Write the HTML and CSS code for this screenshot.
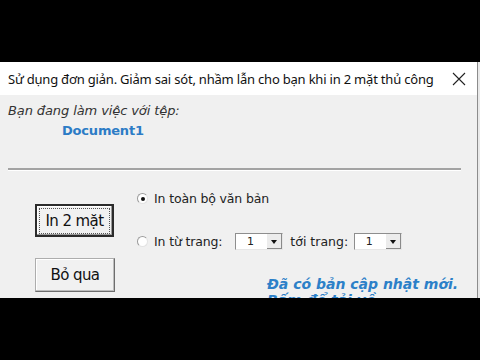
FILE: index.html
```html
<!DOCTYPE html>
<html lang="vi">

<head>
  <meta charset="UTF-8">
  <title>In 2 mặt</title>
  <link rel="stylesheet" href="styles.css">
</head>

<body>
  <div class="letterbox"></div>

  <div class="middle">
    <div class="window">
      <div class="titlebar">
        <span class="title">Sử dụng đơn giản. Giảm sai sót, nhầm lẫn cho bạn khi in 2 mặt thủ công</span>
        <svg class="close" width="14" height="14" viewBox="0 0 14 14">
          <path d="M1 1 L13 13 M13 1 L1 13" stroke="#222" stroke-width="1.1" fill="none" />
        </svg>
      </div>

      <div class="content">
        <p class="file-label">Bạn đang làm việc với tệp:</p>
        <p class="file-name">Document1</p>
        <div class="separator"></div>

        <div class="main">
          <div class="buttons">
            <button class="btn btn-default"><span class="focus">In 2 mặt</span></button>
            <button class="btn">Bỏ qua</button>
          </div>

          <div class="options">
            <label class="option">
              <span class="radio checked"></span>
              <span>In toàn bộ văn bản</span>
            </label>
            <label class="option option-range">
              <span class="radio"></span>
              <span>In từ trang:</span>
              <span class="combo combo-from"><span class="combo-value">1</span><span class="combo-arrow"></span></span>
              <span class="to-label">tới trang:</span>
              <span class="combo combo-to"><span class="combo-value">1</span><span class="combo-arrow"></span></span>
            </label>
            <p class="update-note">Đã có bản cập nhật mới.<br>Bấm để tải về</p>
          </div>
        </div>
      </div>
    </div>
  </div>

  <div class="letterbox"></div>
</body>

</html>
```

FILE: styles.css
```css
body {
  margin: 0;
  width: 480px;
  height: 360px;
  background-color: #000;
  font-family: 'DejaVu Sans', sans-serif;
  overflow: hidden;
}

.letterbox {
  height: 62px;
  background-color: #000;
}

.middle {
  display: flex;
  height: 236px;
  background-color: #e9e9e9;
}

.window {
  width: 477px;
  height: 236px;
  border-right: 1px solid #8c8c8c;
  background-color: #f0f0f0;
  overflow: hidden;
}

.titlebar {
  height: 33px;
  background-color: #fff;
  display: flex;
  align-items: center;
  padding: 0 11px 0 8px;
  justify-content: space-between;
}

.title {
  font-family: 'Noto Sans', sans-serif;
  font-size: 13px;
  color: #111;
  letter-spacing: -0.2px;
  padding-top: 1px;
}

.close {
  display: block;
}

.content {
  padding: 8px 16px 0 8px;
}

p {
  margin: 0;
}

.file-label {
  font-size: 13px;
  font-style: italic;
  line-height: 16px;
  color: #333;
  letter-spacing: -0.1px;
}

.file-name {
  margin-top: 4px;
  padding-left: 54px;
  font-size: 13px;
  font-weight: bold;
  line-height: 16px;
  color: #2c7cc6;
  letter-spacing: -0.2px;
}

.separator {
  margin-top: 29px;
  height: 0;
  border-top: 2px solid #a3a3a3;
  border-bottom: 1px solid #fff;
}

.main {
  display: flex;
}

.buttons {
  display: flex;
  flex-direction: column;
  gap: 21px;
  padding: 33px 0 0 27px;
}

.btn {
  width: 80px;
  height: 34px;
  padding: 0;
  font-family: 'DejaVu Sans', sans-serif;
  font-size: 15px;
  color: #111;
  letter-spacing: -0.6px;
  background-color: #f1f1f1;
  border: 1px solid #adadad;
  border-right-color: #6e6e6e;
  border-bottom-color: #6e6e6e;
  box-shadow: inset -1px -1px 0 #bdbdbd, inset 1px 1px 0 #fff;
}

.btn-default {
  width: 79px;
  height: 33px;
  border: 2px solid #2b2b2b;
  box-shadow: inset -1px -1px 0 #9a9a9a, inset 1px 1px 0 #fff;
}

.focus {
  display: block;
  margin: 2px;
  padding: 3px 0;
  border: 1px dotted #555;
}

.options {
  padding: 19px 0 0 22px;
  font-size: 12.5px;
  color: #222;
  letter-spacing: -0.15px;
}

.option {
  display: flex;
  align-items: center;
  height: 17px;
  gap: 5px;
}

.option-range {
  margin-top: 26px;
}

.radio {
  width: 11px;
  height: 11px;
  border-radius: 50%;
  border: 1px solid #9b9b9b;
  border-right-color: #e3e3e3;
  border-bottom-color: #e3e3e3;
  background-color: #fff;
  box-sizing: border-box;
  position: relative;
  margin-right: 1px;
}

.radio.checked::after {
  content: "";
  position: absolute;
  left: 3px;
  top: 3px;
  width: 4px;
  height: 4px;
  border-radius: 50%;
  background-color: #111;
}

.combo {
  display: flex;
  width: 48px;
  height: 17px;
  box-sizing: border-box;
  border: 1px solid #8e8e8e;
  border-right-color: #e6e6e6;
  border-bottom-color: #e6e6e6;
  background-color: #fff;
}

.combo-from {
  margin-left: 8px;
}

.combo-to {
  margin-left: 1px;
}

.combo-value {
  flex: 1;
  font-size: 11px;
  line-height: 15px;
  text-align: center;
  padding-right: 2px;
}

.combo-arrow {
  width: 15px;
  background-color: #ececec;
  border-left: 1px solid #fff;
  box-shadow: inset -1px -1px 0 #8a8a8a;
  position: relative;
}

.combo-arrow::after {
  content: "";
  position: absolute;
  left: 4px;
  top: 6px;
  border-left: 3px solid transparent;
  border-right: 3px solid transparent;
  border-top: 4px solid #111;
}

.to-label {
  margin-left: 2px;
  letter-spacing: 0;
}

.update-note {
  margin-top: 26px;
  padding-left: 130px;
  font-size: 14px;
  font-weight: bold;
  font-style: italic;
  line-height: 16px;
  color: #2c80c8;
  letter-spacing: 0;
}
```
